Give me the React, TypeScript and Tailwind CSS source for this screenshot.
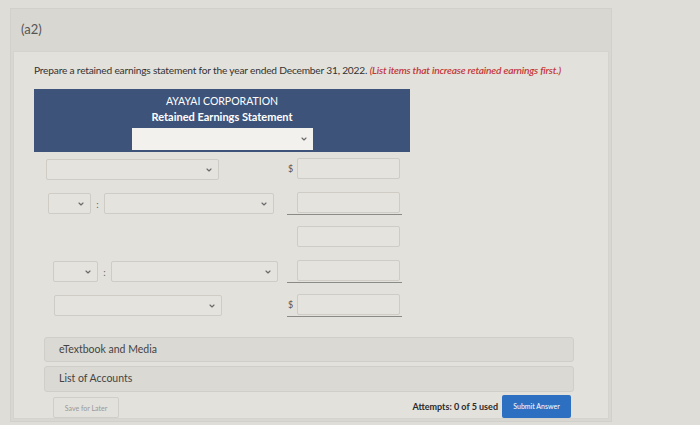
import { ChevronDown } from "lucide-react"

function Select({ w, h = "h-[21px]" }: { w: string; h?: string }) {
  return (
    <div
      className={`${w} ${h} flex items-center justify-end rounded-[2px] border border-[#cfccc5] bg-[#e5e3dd] pr-[5px]`}
    >
      <ChevronDown size={8} strokeWidth={3.5} className="text-[#6a6a6a]" />
    </div>
  )
}

function Amount({ dollar, line }: { dollar?: boolean; line?: boolean }) {
  return (
    <div
      className={`flex w-[115px] items-center pb-[1px] ${line ? "border-b border-[#8a8a86]" : "border-b border-transparent"}`}
    >
      <span className="w-[10px] pl-[1px] text-[9px] text-[#555]">{dollar ? "$" : ""}</span>
      <div className="h-[21px] w-[103px] rounded-[2px] border border-[#cfccc5] bg-[#e5e3dd]" />
    </div>
  )
}

function Colon() {
  return <span className="w-[13px] text-center text-[10px] leading-none text-[#666]">:</span>
}

export default function App() {
  return (
    <div
      className="h-[425px] w-[700px] overflow-hidden bg-[#dfddd7] pt-[8px]"
      style={{ fontFamily: "Lato, 'Open Sans', sans-serif" }}
    >
      <div className="ml-[10px] w-[602px] border border-[#d2d0ca] bg-[#d9d7d1]">
        <div className="flex h-[42px] items-center pl-[10px] text-[13px] text-[#555]">(a2)</div>
        <div className="mx-[2px] mb-[2px] h-[368px] border border-[#d5d3cd] bg-[#e3e1db] pl-[20px] pt-[11px]">
          <p className="text-[10.2px] tracking-[-0.2px] text-[#333]">
            Prepare a retained earnings statement for the year ended December 31, 2022.{" "}
            <span className="font-semibold italic text-[#c2373a]">
              (List items that increase retained earnings first.)
            </span>
          </p>

          <div className="mt-[11px] flex h-[63px] w-[376px] flex-col items-center bg-[#3d5379] pt-[5px] text-white">
            <div className="text-[10.5px] leading-[15px]">AYAYAI CORPORATION</div>
            <div className="text-[11px] font-bold leading-[15px]">Retained Earnings Statement</div>
            <div className="mt-[4px] flex h-[22px] w-[181px] items-center justify-end bg-[#f2f1ee] pr-[5px]">
              <ChevronDown size={8} strokeWidth={3.5} className="text-[#6a6a6a]" />
            </div>
          </div>

          <div className="mt-[6px] flex flex-col gap-[11px]">
            <div className="flex items-center">
              <div className="flex w-[253px] pl-[12px]">
                <Select w="w-[173px]" />
              </div>
              <Amount dollar />
            </div>

            <div className="flex items-center">
              <div className="flex w-[253px] items-center pl-[14px]">
                <Select w="w-[43px]" />
                <Colon />
                <Select w="w-[170px]" />
              </div>
              <Amount line />
            </div>

            <div className="flex items-center">
              <div className="w-[253px]" />
              <Amount />
            </div>

            <div className="flex items-center">
              <div className="flex w-[253px] items-center pl-[19px]">
                <Select w="w-[45px]" />
                <Colon />
                <Select w="w-[167px]" />
              </div>
              <Amount line />
            </div>

            <div className="flex items-center">
              <div className="flex w-[253px] pl-[20px]">
                <Select w="w-[168px]" />
              </div>
              <Amount dollar line />
            </div>
          </div>

          <div className="mt-[20px] flex w-[540px] flex-col gap-[4px] pl-[10px]">
            <div className="flex h-[25px] items-center rounded-[3px] border border-[#d0cec8] bg-[#dbd9d3] pl-[14px] text-[10.5px] text-[#444]">
              eTextbook and Media
            </div>
            <div className="flex h-[26px] items-center rounded-[3px] border border-[#d0cec8] bg-[#dbd9d3] pl-[14px] text-[10.5px] text-[#444]">
              List of Accounts
            </div>
          </div>

          <div className="mt-[2px] flex w-[537px] items-center pl-[19px]">
            <div className="mt-[3px] flex h-[21px] w-[66px] items-center justify-center rounded-[2px] border border-[#d0cec8] text-[7px] text-[#999]">
              Save for Later
            </div>
            <div className="ml-auto mr-[4px] text-[9px] font-bold text-[#2a2a2a]">Attempts: 0 of 5 used</div>
            <div className="flex h-[23px] w-[69px] items-center justify-center rounded-[2px] bg-[#2d70c2] text-[7px] text-white">
              Submit Answer
            </div>
          </div>
        </div>
      </div>
    </div>
  )
}
